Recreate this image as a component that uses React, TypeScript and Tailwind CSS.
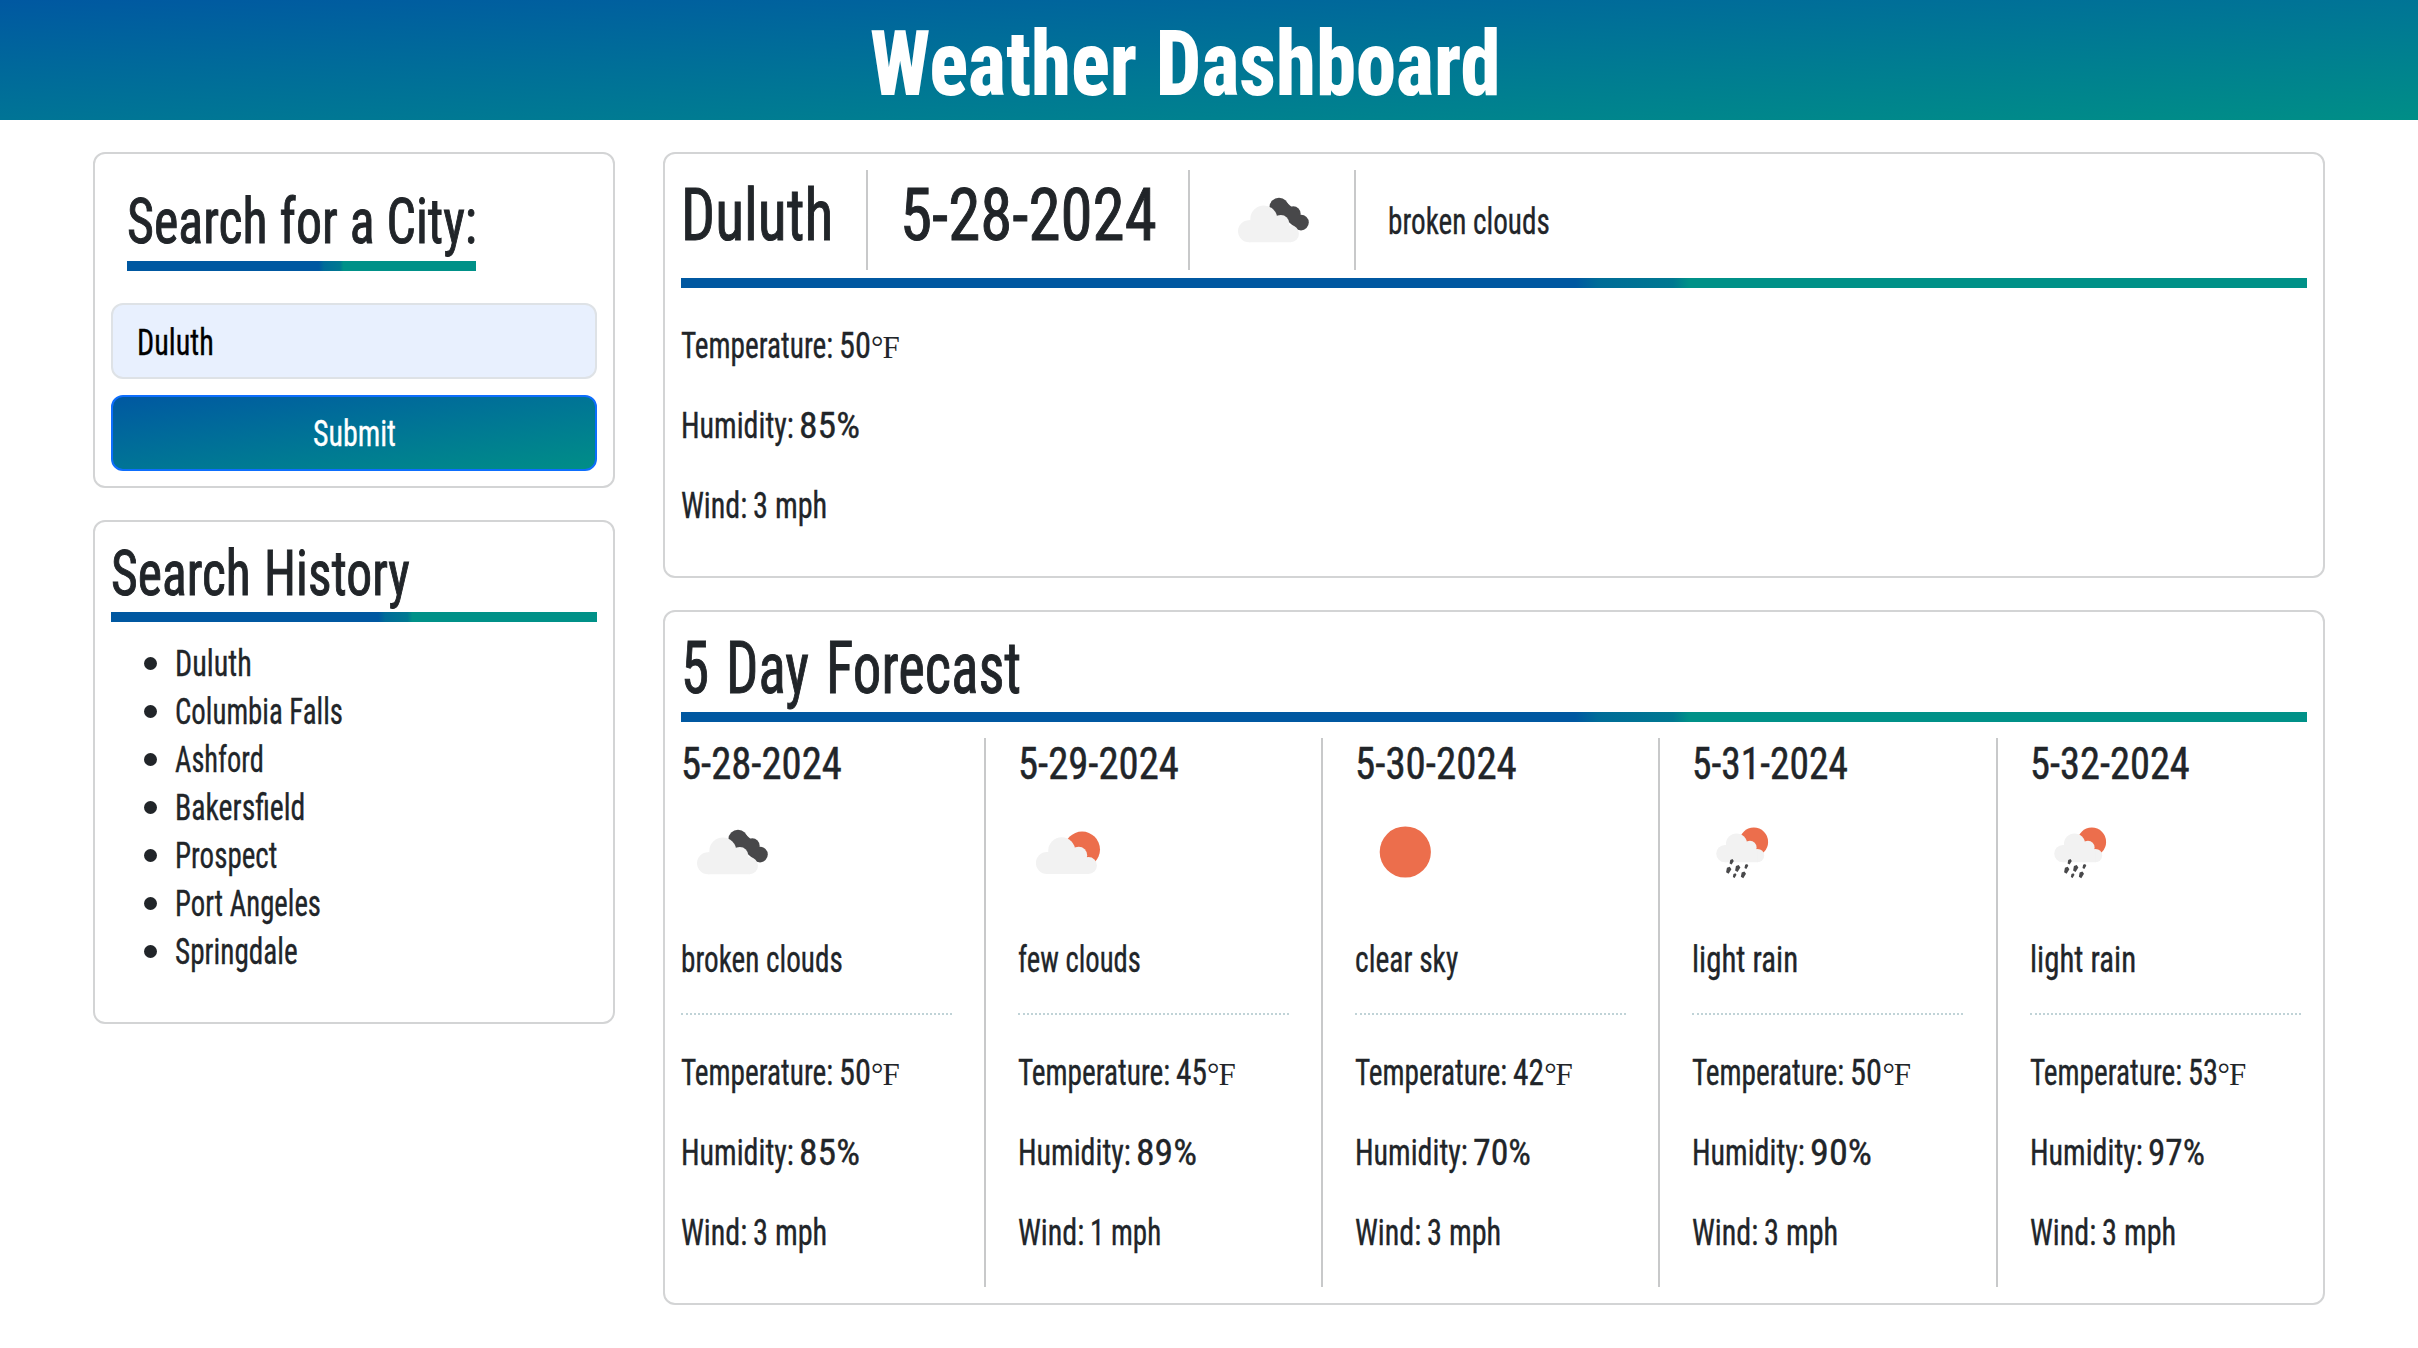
import React, { useLayoutEffect, useRef, useState } from "react";

/* Condensed text: the inner span is squeezed horizontally to fill the given width. */
function Fit({ w, children, className = "" }: { w: number; children: React.ReactNode; className?: string }) {
  const ref = useRef<HTMLSpanElement>(null);
  const [s, setS] = useState(0.7);
  useLayoutEffect(() => {
    const measure = () => ref.current && setS(w / ref.current.offsetWidth);
    measure();
    document.fonts.ready.then(measure);
  }, [w]);
  return (
    <span className={`block shrink-0 overflow-visible whitespace-nowrap ${className}`} style={{ width: w }}>
      <span ref={ref} className="inline-block origin-left" style={{ transform: `scaleX(${s})` }}>
        {children}
      </span>
    </span>
  );
}

const BODY = "h-12 text-[36.4px] leading-[52px] [-webkit-text-stroke:0.35px]";
const HEAD = "[-webkit-text-stroke:1px]";

const Bar = ({ className = "" }: { className?: string }) => (
  <div
    className={`h-[10px] bg-[linear-gradient(to_right,#0058a1_55%,#006c98_56.4%,#007891_61%,#009188_62%)] ${className}`}
  />
);

const Cloud = () => (
  <g fill="#f2f2f2">
    <circle cx="28.2" cy="61" r="11" />
    <circle cx="43" cy="48.8" r="13.5" />
    <circle cx="60" cy="53.3" r="8.5" />
    <circle cx="69.7" cy="63.5" r="8.5" />
    <path d="M28 72V50h34l8 7v15z" />
  </g>
);

const Drop = ({ x, y, r }: { x: number; y: number; r: number }) => (
  <path d="M0.4 -1.3 L1 -0.4 L0 1.2 L-0.9 0.7 L-0.6 -0.9z" fill="#48484a" transform={`translate(${x} ${y}) scale(${r})`} />
);

function Icon({ kind }: { kind: string }) {
  return (
    <svg viewBox="0 0 100 100" className="block size-[100px] shrink-0">
      {kind === "broken clouds" && (
        <>
          <g fill="#48484a">
            <circle cx="57" cy="37.4" r="9.6" />
            <circle cx="71.3" cy="43.6" r="7.3" />
            <circle cx="79" cy="52.6" r="7.8" />
            <path d="M48 36L76 60L80 46L64 32z" />
          </g>
          <g transform="translate(-1.2 0.3)"><Cloud /></g>
        </>
      )}
      {kind === "few clouds" && (
        <>
          <circle cx="64.1" cy="47.5" r="17.9" fill="#ec6e4c" />
          <g transform="translate(0.7 0)"><Cloud /></g>
        </>
      )}
      {kind === "clear sky" && <circle cx="50.3" cy="50" r="25.6" fill="#ec6e4c" />}
      {kind === "light rain" && (
        <>
          <circle cx="61.8" cy="39.9" r="14.3" fill="#ec6e4c" />
          <g transform="translate(10.7 3.6) scale(.787)"><Cloud /></g>
          <Drop x={39.6} y={59.9} r={2.2} />
          <Drop x={36.6} y={68.3} r={2.8} />
          <Drop x={45.6} y={66.6} r={2.8} />
          <Drop x={54.3} y={64.6} r={2} />
          <Drop x={42.6} y={73.6} r={1.9} />
          <Drop x={51.3} y={72.9} r={2.7} />
        </>
      )}
    </svg>
  );
}

type Day = {
  date: string; dateW: number; desc: string; descW: number;
  temp: number; tempW: number; hum: number; humW: number; wind: number; windW: number;
};

const days: Day[] = [
  { date: "5-28-2024", dateW: 161, desc: "broken clouds", descW: 162, temp: 50, tempW: 32, hum: 85, humW: 61, wind: 3, windW: 74 },
  { date: "5-29-2024", dateW: 161, desc: "few clouds", descW: 123, temp: 45, tempW: 31, hum: 89, humW: 61, wind: 1, windW: 71 },
  { date: "5-30-2024", dateW: 162, desc: "clear sky", descW: 103, temp: 42, tempW: 31, hum: 70, humW: 58, wind: 3, windW: 74 },
  { date: "5-31-2024", dateW: 156, desc: "light rain", descW: 106, temp: 50, tempW: 32, hum: 90, humW: 62, wind: 3, windW: 74 },
  { date: "5-32-2024", dateW: 160, desc: "light rain", descW: 106, temp: 53, tempW: 30, hum: 97, humW: 57, wind: 3, windW: 74 },
];

const history: [string, number][] = [
  ["Duluth", 77], ["Columbia Falls", 168], ["Ashford", 89], ["Bakersfield", 130],
  ["Prospect", 102], ["Port Angeles", 146], ["Springdale", 123],
];

function Stats({ d }: { d: Day }) {
  return (
    <div className="flex flex-col gap-8">
      <div className="flex">
        <Fit w={152} className={`mr-[6px] ${BODY}`}>Temperature:</Fit>
        <Fit w={d.tempW} className={BODY}>{d.temp}</Fit>
        <span className="flex h-12 font-['Liberation_Serif',serif] text-[31px] leading-[56px]">
          <span>°</span>
          <span className="-ml-px">F</span>
        </span>
      </div>
      <div className="flex">
        <Fit w={113} className={`mr-[5px] ${BODY}`}>Humidity:</Fit>
        <Fit w={d.humW} className={BODY}>{d.hum}%</Fit>
      </div>
      <div className="flex">
        <Fit w={66} className={`mr-[6px] ${BODY}`}>Wind:</Fit>
        <Fit w={d.windW} className={BODY}>{d.wind} mph</Fit>
      </div>
    </div>
  );
}

const CARD = "rounded-[12px] border-2 border-[#d3d4d5] bg-white px-4";

export default function App() {
  return (
    <div className="h-[1348px] w-[2418px] overflow-hidden bg-white font-[Roboto,sans-serif] text-[#212529] [font-stretch:75%]">
      <header className="flex h-[120px] bg-linear-to-br from-[#0058a1] to-[#008e87] pl-[870px] text-white">
        <Fit w={631} className="h-[120px] text-[91px] leading-[129px] font-extrabold">Weather Dashboard</Fit>
      </header>

      <div className="flex items-start gap-12 pt-8 pl-[93px]">
        <aside className="flex w-[522px] flex-col gap-8">
          <section className={`${CARD} h-[336px]`}>
            <div className="ml-4 w-[349px] pt-[32px]">
              <Fit w={350} className={`h-[75px] text-[63.5px] leading-[72px] ${HEAD}`}>Search for a City:</Fit>
              <Bar />
            </div>
            <div className="mt-8 h-[76px] rounded-[12px] border-2 border-[#dee2e6] bg-[#e8f0fe] pt-3 pl-6 text-black">
              <Fit w={77} className={BODY}>Duluth</Fit>
            </div>
            <button className="mt-4 flex h-[76px] w-full justify-center rounded-[12px] border-2 border-[#0d6efd] bg-linear-to-br from-[#0058a1] to-[#008e87] pt-[11px] text-white">
              <Fit w={83} className={`${BODY} text-left`}>Submit</Fit>
            </button>
          </section>

          <section className={`${CARD} h-[504px]`}>
            <Fit w={299} className={`h-[90px] pt-4 text-[63.5px] leading-[72px] [word-spacing:2px] ${HEAD}`}>Search History</Fit>
            <Bar />
            <ul className="pt-4 pl-8">
              {history.map(([c, w]) => (
                <li key={c} className="flex items-center">
                  <span className="mt-[3px] mr-[18px] ml-px size-[13px] rounded-full bg-[#212529]" />
                  <Fit w={w} className={BODY}>{c}</Fit>
                </li>
              ))}
            </ul>
          </section>
        </aside>

        <main className="flex w-[1662px] flex-col gap-8">
          <section className={`${CARD} h-[426px]`}>
            <div className="flex h-[116px] pt-4">
              <div className="flex w-[187px] border-r-2 border-[#c8c9ca]">
                <Fit w={152} className={`text-[72.8px] leading-[90px] ${HEAD}`}>Duluth</Fit>
              </div>
              <div className="flex w-[322px] border-r-2 border-[#c8c9ca] pl-8">
                <Fit w={257} className={`text-[72.8px] leading-[90px] ${HEAD}`}>5-28-2024</Fit>
              </div>
              <div className="w-[166px] border-r-2 border-[#c8c9ca] pl-8">
                <Icon kind="broken clouds" />
              </div>
              <div className="pt-[26px] pl-8">
                <Fit w={162} className={BODY}>broken clouds</Fit>
              </div>
            </div>
            <Bar className="mt-2 mb-8" />
            <Stats d={days[0]} />
          </section>

          <section className={`${CARD} h-[695px]`}>
            <Fit w={340} className={`h-[100px] pt-4 text-[72.8px] leading-[80px] [word-spacing:5px] ${HEAD}`}>5 Day Forecast</Fit>
            <Bar />
            <div className="flex pt-4">
              {days.map((d, i) => (
                <div key={d.date} className={`h-[549px] shrink-0 ${i === 0 ? "w-[305px]" : i === 4 ? "w-[305px] pl-8" : "w-[337.2px] pl-8"} ${i < 4 ? "border-r-2 border-[#c8c9ca]" : ""}`}>
                  <Fit w={d.dateW} className="h-16 text-[45px] leading-[52px] [-webkit-text-stroke:0.5px]">{d.date}</Fit>
                  <Icon kind={d.desc} />
                  <Fit w={d.descW} className={`mt-8 ${BODY}`}>{d.desc}</Fit>
                  <div className="mt-[31px] mb-8 w-[271px] border-t-2 border-dotted border-[#c0d3d7]" />
                  <Stats d={d} />
                </div>
              ))}
            </div>
          </section>
        </main>
      </div>
    </div>
  );
}
